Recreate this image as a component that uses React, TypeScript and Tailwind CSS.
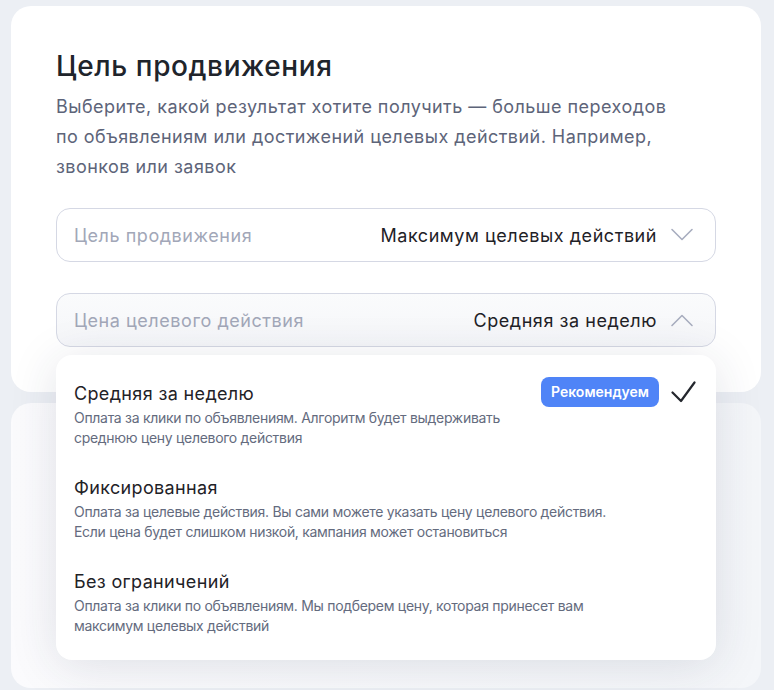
type Option = {
  title: string;
  text: string;
  width: string;
  recommended?: boolean;
};

const options: Option[] = [
  {
    title: "Средняя за неделю",
    text: "Оплата за клики по объявлениям. Алгоритм будет выдерживать среднюю цену целевого действия",
    width: "max-w-[470px]",
    recommended: true,
  },
  {
    title: "Фиксированная",
    text: "Оплата за целевые действия. Вы сами можете указать цену целевого действия. Если цена будет слишком низкой, кампания может остановиться",
    width: "max-w-[560px]",
  },
  {
    title: "Без ограничений",
    text: "Оплата за клики по объявлениям. Мы подберем цену, которая принесет вам максимум целевых действий",
    width: "max-w-[560px]",
  },
];

function Chevron({ up }: { up?: boolean }) {
  return (
    <svg width="24" height="14" viewBox="0 0 24 14" fill="none" className="shrink-0">
      <path
        d={up ? "M2 12.5L12 2.5L22 12.5" : "M2 1.5L12 11.5L22 1.5"}
        stroke="#a8adbf"
        strokeWidth="1.6"
        strokeLinecap="round"
        strokeLinejoin="round"
      />
    </svg>
  );
}

function CheckMark() {
  return (
    <svg width="25" height="24" viewBox="0 0 25 24" fill="none" className="shrink-0">
      <path
        d="M1.5 12.5L10 21L23.5 2.5"
        stroke="#24272d"
        strokeWidth="2.2"
        strokeLinecap="round"
        strokeLinejoin="round"
      />
    </svg>
  );
}

function Field({
  label,
  value,
  open,
}: {
  label: string;
  value: string;
  open?: boolean;
}) {
  return (
    <div
      className={
        "flex h-[54px] items-center rounded-[14px] border border-[#d5d8e4] pl-[17px] pr-[21px] tracking-[0.55px] " +
        (open ? "bg-gradient-to-b from-[#fafbfc] to-[#f5f6f9]" : "bg-white")
      }
    >
      <span className="text-[18px] text-[#a2a7b8]">{label}</span>
      <span className="ml-auto mr-[13px] text-[18px] text-[#1f2227]">{value}</span>
      <Chevron up={open} />
    </div>
  );
}

export default function App() {
  return (
    <div
      className="flex min-h-[690px] flex-col gap-[11px] bg-[#eceff4] pl-[11px] pr-[13px] pt-[6px]"
      style={{ fontFamily: "Inter, 'Noto Sans', sans-serif" }}
    >
      {/* Main card */}
      <div className="relative rounded-[20px] bg-white px-[45px] pb-[45px] pt-[40px]">
        <h1 className="text-[28px] font-medium leading-[40px] tracking-[0.6px] text-[#20242b]">
          Цель продвижения
        </h1>
        <p className="mt-[6px] text-[18px] leading-[30px] tracking-[0.45px] text-[#5d6479]">
          Выберите, какой результат хотите получить — больше переходов
          <br />
          по объявлениям или достижений целевых действий. Например,
          <br />
          звонков или заявок
        </p>

        <div className="mt-[26px] flex flex-col gap-[31px]">
          <Field label="Цель продвижения" value="Максимум целевых действий" />
          <Field label="Цена целевого действия" value="Средняя за неделю" open />
        </div>

        {/* Dropdown */}
        <div className="absolute left-[45px] right-[45px] top-[349px] z-10 flex flex-col gap-[26px] rounded-[16px] bg-white px-[18px] pb-[24px] pt-[25px] shadow-[0_6px_48px_rgba(40,50,80,0.13)]">
          {options.map((o) => (
            <div key={o.title} className="flex items-start">
              <div className="min-w-0 flex-1">
                <div className="text-[18px] leading-[28px] tracking-[0.35px] text-[#1f2227]">
                  {o.title}
                </div>
                <div
                  className={
                    "text-[14px] leading-[20px] tracking-[-0.3px] text-[#646b7e] " + o.width
                  }
                >
                  {o.text}
                </div>
              </div>
              {o.recommended && (
                <div className="-mt-[3px] flex items-center gap-[12px] pr-[2px]">
                  <span className="rounded-[8px] bg-[#4f84f7] px-[10px] py-[5px] text-[14px] font-semibold leading-[20px] text-white">
                    Рекомендуем
                  </span>
                  <CheckMark />
                </div>
              )}
            </div>
          ))}
        </div>
      </div>

      {/* Next card (behind dropdown) */}
      <div className="h-[285px] rounded-[20px] bg-gradient-to-r from-[#fbfbfd] to-[#f4f6f9]" />
    </div>
  );
}
